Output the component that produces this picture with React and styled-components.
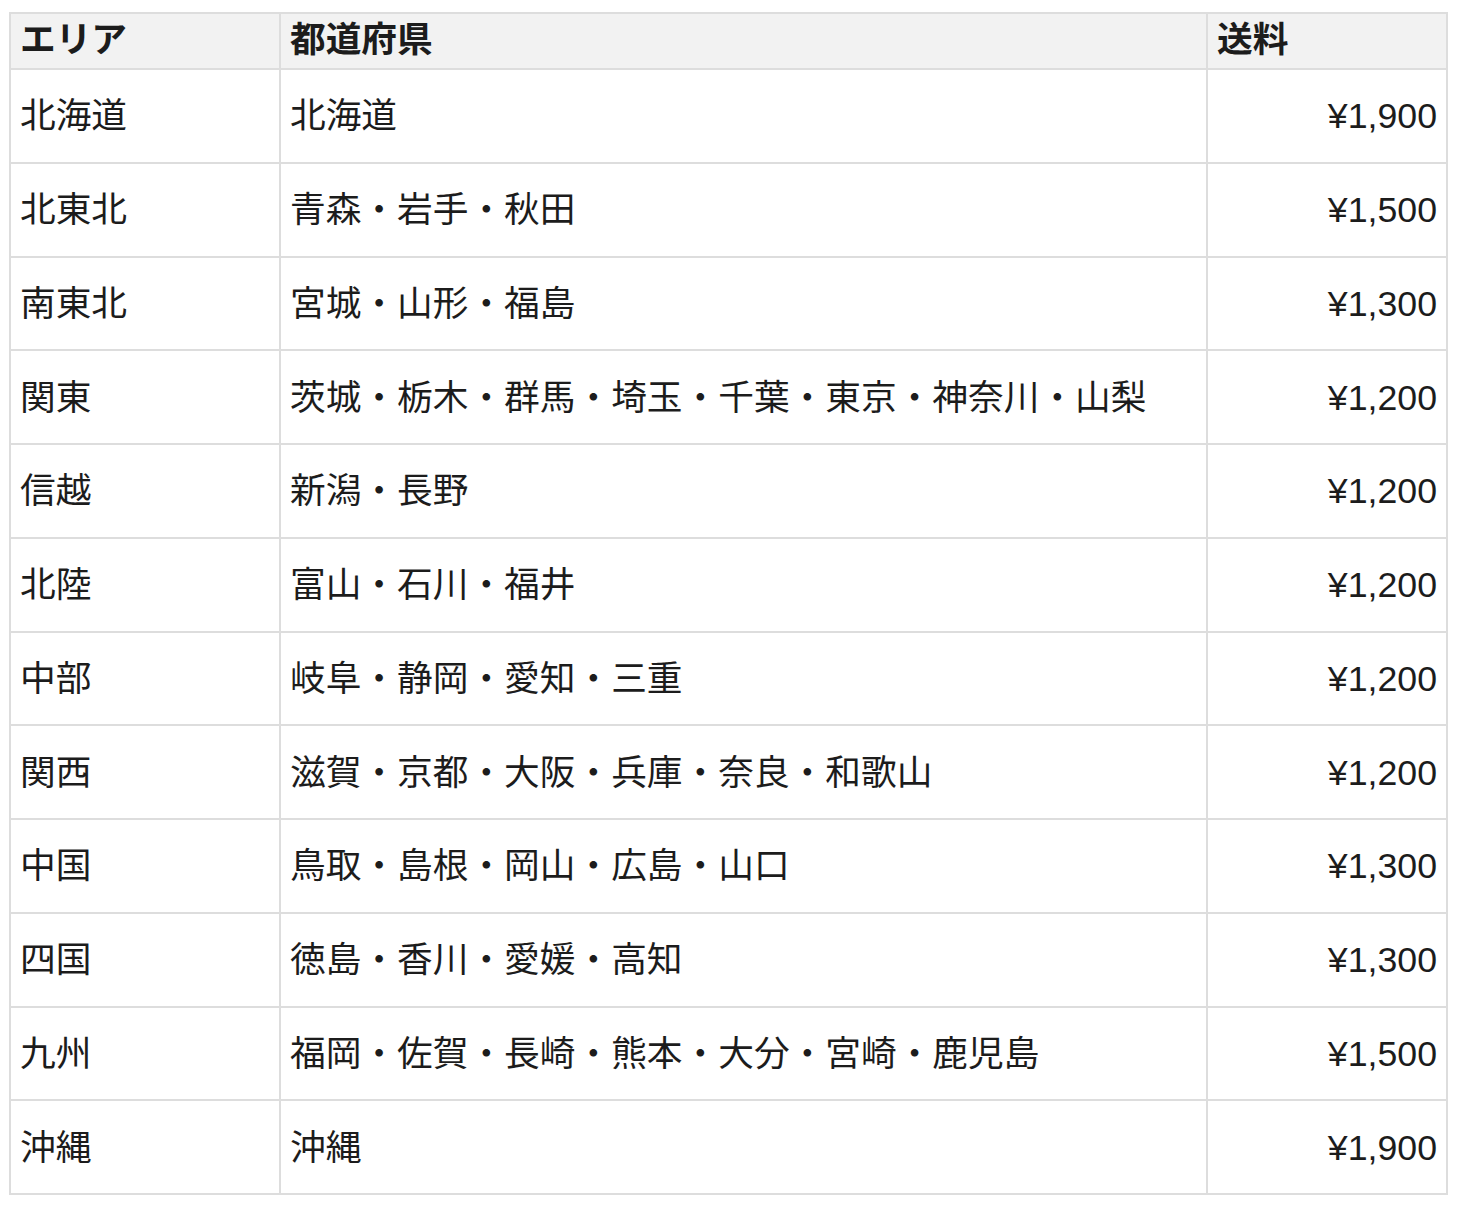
import React from 'react';
import styled, { createGlobalStyle } from 'styled-components';

const rows = [
    ['北海道', '北海道', '¥1,900'],
    ['北東北', '青森・岩手・秋田', '¥1,500'],
    ['南東北', '宮城・山形・福島', '¥1,300'],
    ['関東', '茨城・栃木・群馬・埼玉・千葉・東京・神奈川・山梨', '¥1,200'],
    ['信越', '新潟・長野', '¥1,200'],
    ['北陸', '富山・石川・福井', '¥1,200'],
    ['中部', '岐阜・静岡・愛知・三重', '¥1,200'],
    ['関西', '滋賀・京都・大阪・兵庫・奈良・和歌山', '¥1,200'],
    ['中国', '鳥取・島根・岡山・広島・山口', '¥1,300'],
    ['四国', '徳島・香川・愛媛・高知', '¥1,300'],
    ['九州', '福岡・佐賀・長崎・熊本・大分・宮崎・鹿児島', '¥1,500'],
    ['沖縄', '沖縄', '¥1,900'],
];

const GlobalStyle = createGlobalStyle`
body {
    margin: 0;
    background: #fff;
    font-family: "Liberation Sans", "Noto Sans CJK JP", sans-serif;
    color: #1c1c1c;
}
`

const Page = styled.div`
padding: 12px 14px 16px 9px;
`

const Table = styled.table`
width: 1439px;
border-collapse: collapse;
table-layout: fixed;
font-size: 35.7px;
`

const HeadCell = styled.th`
height: 54px;
padding: 0 9px;
text-align: left;
font-weight: 700;
background: #f2f2f2;
border: 2px solid #dddddd;
line-height: 1;
`

const BodyRow = styled.tr`
height: 93.75px;
`

const Cell = styled.td`
padding: 2px 9px 0;
border: 2px solid #dddddd;
text-align: ${p => p.right ? 'right' : 'left'};
vertical-align: middle;
line-height: 1.2;
`

export default function App() {
    return (
        <Page>
            <GlobalStyle />
            <Table>
                <colgroup>
                    <col style={{ width: 270 }} />
                    <col style={{ width: 927 }} />
                    <col />
                </colgroup>
                <thead>
                    <tr>
                        <HeadCell>エリア</HeadCell>
                        <HeadCell>都道府県</HeadCell>
                        <HeadCell>送料</HeadCell>
                    </tr>
                </thead>
                <tbody>
                    {rows.map(([area, pref, fee]) => (
                        <BodyRow key={area}>
                            <Cell>{area}</Cell>
                            <Cell>{pref}</Cell>
                            <Cell right>{fee}</Cell>
                        </BodyRow>
                    ))}
                </tbody>
            </Table>
        </Page>
    )
}
